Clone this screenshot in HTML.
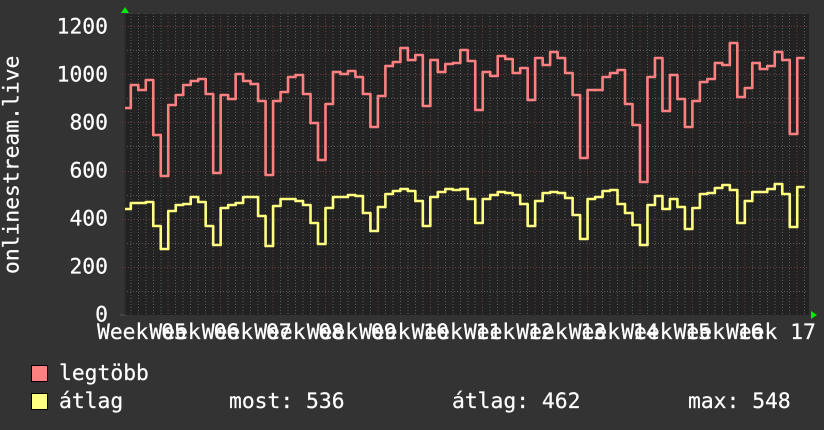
<!DOCTYPE html>
<html><head><meta charset="utf-8"><style>
html,body{margin:0;padding:0;background:#333}
svg{display:block}
text{font-family:"DejaVu Sans Mono","Liberation Mono",monospace;font-size:21.33px;fill:#fff;stroke:#fff;stroke-width:.2}
</style></head><body>
<svg width="824" height="430" viewBox="0 0 824 430" xmlns="http://www.w3.org/2000/svg">
<defs>
<g id="wk">
<path d="M0 13V315M1 13V315M2 13V315M3 13V315M4 13V315M6 13V315" fill="none" stroke="#5a5a5a" stroke-width="1" stroke-dasharray="1 2" vector-effect="non-scaling-stroke"/>
<path d="M5 13V315" fill="none" stroke="#6a3c3c" stroke-width="1" stroke-dasharray="1 2" vector-effect="non-scaling-stroke"/>
</g>
</defs>
<rect width="824" height="430" fill="#333"/>
<rect x="124" y="14" width="685" height="301" fill="#222"/>
<rect x="124" y="14" width="2" height="301" fill="#2a2a2a"/>
<g stroke-width="1" fill="none" stroke-dasharray="1 2" shape-rendering="crispEdges">
<path d="M124 50.5H808M124 98.5H808M124 146.5H808M124 195.5H808M124 243.5H808M124 291.5H808" stroke="#5a5a5a"/>
<path d="M122 26.5H808M122 74.5H808M122 122.5H808M122 171.5H808M122 219.5H808M122 267.5H808" stroke="#6a3c3c"/>
</g>
<g transform="translate(130.8 0) scale(7.488 1)" shape-rendering="crispEdges">
<use href="#wk"/><use href="#wk" x="7"/><use href="#wk" x="14"/><use href="#wk" x="21"/><use href="#wk" x="28"/><use href="#wk" x="35"/><use href="#wk" x="42"/><use href="#wk" x="49"/><use href="#wk" x="56"/><use href="#wk" x="63"/><use href="#wk" x="70"/><use href="#wk" x="77"/><use href="#wk" x="84"/>
</g>
<path d="M120 315H126" stroke="#555" stroke-width="1"/>
<path d="M124.5 13V315" stroke="#2c2c2c" stroke-width="1"/>
<polygon points="121,13 129,13 125,7" fill="#0e0"/>
<polygon points="811,311 811,319 817,315" fill="#0e0"/>
<g transform="translate(130.8 0) scale(7.488 1)" fill="none" stroke-linejoin="round">
<path vector-effect="non-scaling-stroke" stroke="#ff8080" stroke-width="2.6" d="M-.77 108H0V85H1V90H2V80H3V135H4V176H5V105H6V95H7V85H8V81H9V79H10V94H11V173H12V95H13V99H14V74H15V81H16V84H17V101H18V175H19V101H20V92H21V77H22V75H23V94H24V123H25V160H26V104H27V72H28V74H29V71H30V77H31V94H32V127H33V96H34V66H35V62H36V48H37V60H38V55H39V106H40V60H41V72H42V64H43V63H44V50H45V61H46V110H47V72H48V76H49V56H50V59H51V73H52V68H53V100H54V58H55V65H56V52H57V58H58V73H59V95H60V158H61V90H62V90H63V77H64V73H65V70H66V104H67V125H68V182H69V77H70V58H71V111H72V75H73V99H74V127H75V101H76V82H77V79H78V63H79V65H80V43H81V97H82V88H83V63H84V69H85V66H86V52H87V60H88V134H89V58H90"/>
<path vector-effect="non-scaling-stroke" stroke="#ffff80" stroke-width="2.6" d="M-.77 209H0V203H1V203H2V202H3V226H4V249H5V211H6V205H7V204H8V197H9V202H10V226H11V245H12V208H13V205H14V203H15V197H16V197H17V216H18V246H19V206H20V199H21V199H22V201H23V205H24V223H25V244H26V208H27V197H28V197H29V195H30V196H31V213H32V231H33V207H34V194H35V191H36V189H37V191H38V201H39V226H40V197H41V192H42V189H43V190H44V189H45V199H46V223H47V199H48V195H49V192H50V193H51V195H52V204H53V226H54V201H55V193H56V192H57V193H58V198H59V215H60V239H61V199H62V197H63V191H64V190H65V204H66V213H67V225H68V245H69V205H70V196H71V209H72V199H73V207H74V229H75V208H76V194H77V193H78V188H79V185H80V190H81V223H82V201H83V192H84V192H85V189H86V184H87V194H88V227H89V187H90"/>
</g>
<g text-anchor="end">
<text x="108" y="33.5">1200</text>
<text x="108" y="81.5">1000</text>
<text x="108" y="129.5">800</text>
<text x="108" y="177.5">600</text>
<text x="108" y="225.5">400</text>
<text x="108" y="273.5">200</text>
<text x="108" y="321.5">0</text>
</g>
<text transform="translate(18.5 274) rotate(-90)">onlinestream.live</text>
<g xml:space="preserve">
<text x="97" y="339">Week 05</text>
<text x="149.4" y="339">Week 06</text>
<text x="201.8" y="339">Week 07</text>
<text x="254.2" y="339">Week 08</text>
<text x="306.7" y="339">Week 09</text>
<text x="359.1" y="339">Week 10</text>
<text x="411.5" y="339">Week 11</text>
<text x="463.9" y="339">Week 12</text>
<text x="516.3" y="339">Week 13</text>
<text x="568.7" y="339">Week 14</text>
<text x="621.2" y="339">Week 15</text>
<text x="673.6" y="339">Week 16</text>
<text x="726" y="339">Week 17</text>
</g>
<rect x="31.5" y="365.5" width="16" height="16" fill="#ff8080" stroke="#000" stroke-width="1"/>
<rect x="31.5" y="393.5" width="16" height="16" fill="#ffff80" stroke="#000" stroke-width="1"/>
<text x="59" y="380">legtöbb</text>
<text x="59" y="408">átlag</text>
<text x="229" y="408">most: 536</text>
<text x="452" y="408">átlag: 462</text>
<text x="688" y="408">max: 548</text>
</svg>
</body></html>
